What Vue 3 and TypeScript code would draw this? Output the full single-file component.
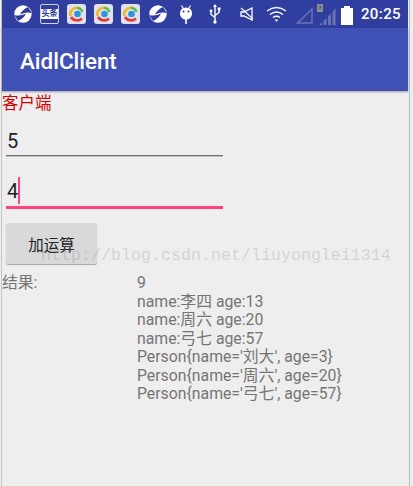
<script setup lang="ts">
const lines: string[] = [
  '9',
  'name:李四 age:13',
  'name:周六 age:20',
  'name:弓七 age:57',
  "Person{name='刘大', age=3}",
  "Person{name='周六', age=20}",
  "Person{name='弓七', age=57}",
]
</script>

<template>
  <div class="frame">
    <div class="phone">
      <div class="status">
        <div class="left-icons">
          <svg class="swirl" width="18" height="18" viewBox="0 0 18 18"><circle cx="9" cy="9" r="8.700" fill="#fff"/><path d="M17.800 8 Q12 6.500 6 9.500 Q8 5 14 2Z" fill="#2f3c9a"/><path d="M0.200 10 Q6 11.500 12 8.500 Q10 13 4 16Z" fill="#2f3c9a"/></svg>
          <div class="toutiao"><span>头条</span></div>
          <div class="tencent" v-for="n in 3" :key="n"><svg width="19" height="20" viewBox="0 0 19 20"><rect width="19" height="20" rx="3" fill="#dfe2ee"/><path d="M3.500 12 A6.500 6.500 0 0 1 10 3.800" fill="none" stroke="#f2b91c" stroke-width="2.600"/><path d="M10 3.800 A6.500 6.500 0 0 1 15.500 8" fill="none" stroke="#5dbb46" stroke-width="2.600"/><path d="M4 13 A7 6.500 0 0 0 15 14.500" fill="none" stroke="#e5392f" stroke-width="2.600"/><circle cx="10.500" cy="10" r="3.300" fill="#2f95dc"/></svg></div>
          <svg class="swirl second" width="18" height="18" viewBox="0 0 18 18"><circle cx="9" cy="9" r="8.700" fill="#fff"/><path d="M17.800 8 Q12 6.500 6 9.500 Q8 5 14 2Z" fill="#2f3c9a"/><path d="M0.200 10 Q6 11.500 12 8.500 Q10 13 4 16Z" fill="#2f3c9a"/></svg>
          <svg class="android" width="14" height="19" viewBox="0 0 14 19"><path d="M2.500 0.500 L4.500 4M11.500 0.500 L9.500 4" stroke="#fff" stroke-width="1.200"/><path d="M1 8 A6 5.500 0 0 1 13 8 L13 9 A6 5.500 0 0 1 1 9Z" fill="#fff"/><rect x="6.200" y="13" width="1.600" height="6" fill="#fff"/><circle cx="4.500" cy="6.500" r="1" fill="#2f3c9a"/><circle cx="9.500" cy="6.500" r="1" fill="#2f3c9a"/></svg>
          <svg class="usb" width="12" height="20" viewBox="0 0 12 20"><path d="M6 2 V18M6 13.500 L2 10.500 V7.500M6 11.500 L10 8.500 V6" stroke="#fff" stroke-width="1.400" fill="none"/><path d="M6 0 L8 3 H4Z" fill="#fff"/><circle cx="6" cy="18" r="1.700" fill="#fff"/><circle cx="2" cy="6.800" r="1.400" fill="#fff"/><rect x="8.700" y="3.500" width="2.800" height="2.800" fill="#fff"/></svg>
        </div>
        <div class="right-icons">
          <svg width="14" height="14" viewBox="0 0 14 14" class="mute"><path d="M1 5 H4 L12 1 V13 L4 9 H1Z" fill="none" stroke="#fff" stroke-width="1.300"/><path d="M1 1 L13 12" stroke="#fff" stroke-width="1.100"/></svg>
          <svg width="21" height="17" viewBox="0 0 21 17" class="wifi"><path d="M1 5 Q10.500 -2 20 5M4 8.500 Q10.500 3.500 17 8.500M7 11.500 Q10.500 9 14 11.500" fill="none" stroke="#fff" stroke-width="1.400"/><path d="M8.800 13.500 H12.200 L10.500 16Z" fill="#fff"/></svg>
          <svg width="17" height="17" viewBox="0 0 17 17" class="tri"><path d="M1.500 16 L16 2 V16Z" fill="none" stroke="#6a74b3" stroke-width="1.500"/></svg>
          <div class="signal">
            <span class="sim">?</span>
            <svg width="19" height="19" viewBox="0 0 19 19"><path d="M2 19 L5 16 V19ZM6.500 19 V15 L9.500 12 V19ZM11 19 V10.500 L14 7.500 V19ZM15.500 19 V6 L18.500 2 V19Z" fill="#6a74b3"/></svg>
          </div>
          <div class="battery"></div>
          <span class="clock">20:25</span>
        </div>
      </div>
      <header class="appbar">AidlClient</header>
      <main class="content">
        <div class="client">客户端</div>
        <div class="field"><span>5</span></div>
        <div class="field focused"><span>4</span><i class="caret"></i></div>
        <button class="calc" type="button">加运算</button>
        <div class="result">
          <div class="label">结果:</div>
          <div class="values"><div v-for="l in lines" :key="l">{{ l }}</div></div>
        </div>
        <div class="watermark">http://blog.csdn.net/liuyonglei1314</div>
      </main>
    </div>
  </div>
</template>

<style>
html, body { margin: 0; background: #eee; }
</style>

<style scoped>
.frame { width: 413px; height: 486px; background: #eee; overflow: hidden; font-family: Roboto, "Noto Sans CJK SC", sans-serif; }
.phone { width: 409px; height: 486px; box-sizing: border-box; margin-left: 1px; border-left: 1px solid #c6c6c6; border-right: 1px solid #bdbdbd; background: #eeeeee; display: flex; flex-direction: column; }
.status { height: 28px; margin-right: 1px; background: #303f9f; display: flex; justify-content: space-between; align-items: center; flex: none; }
.left-icons { display: flex; align-items: center; margin-left: 12px; }
.swirl { flex: none; }
.toutiao { width: 19px; height: 20px; margin-left: 8px; border: 1px solid #cfd3e8; box-sizing: border-box; border-radius: 2px; display: flex; align-items: center; justify-content: center; }
.toutiao span { display: block; width: 100%; background: #fff; color: #2a3a92; text-align: center; font-size: 8px; line-height: 10px; font-weight: 700; white-space: nowrap; }
.tencent { width: 19px; height: 20px; margin-left: 8px; }
.second { margin-left: 9px; }
.android { margin-left: 12px; }
.usb { margin-left: 16px; }
.right-icons { display: flex; align-items: center; margin-right: 7px; }
.mute { margin-right: 12px; }
.wifi { margin-right: 9px; }
.tri { margin-top: 2px; }
.signal { position: relative; width: 19px; height: 19px; margin-left: 4px; margin-right: 5px; margin-top: 2px; }
.sim { position: absolute; left: 0; top: -2px; width: 6px; height: 8px; background: #8d8d94; color: #222; font-size: 6px; line-height: 8px; text-align: center; }
.signal svg { display: block; }
.battery { width: 12px; height: 17px; background: #fff; margin-right: 8px; margin-top: 4px; position: relative; }
.battery::before { content: ""; position: absolute; left: 3px; top: -2px; width: 6px; height: 2px; background: #fff; }
.clock { color: #fff; font-size: 15px; font-weight: 500; letter-spacing: 0.400px; }
.appbar { height: 63px; margin-right: 1px; box-sizing: border-box; background: #3f51b5; color: #fff; font-size: 22.400px; font-weight: 500; line-height: 67px; padding-left: 18px; box-shadow: 0 1px 2px rgba(0,0,0,.35); flex: none; position: relative; }
.content { flex: 1; position: relative; display: flex; flex-direction: column; }
.client { color: #d50000; font-size: 16.500px; line-height: 26px; height: 26px; }
.field { width: 217px; margin-left: 4px; height: 39px; box-sizing: border-box; border-bottom: 1px solid #707070; box-shadow: 0 1px 0 #bdbdbd; font-size: 20px; color: #222; line-height: 28px; padding: 10px 0 0 1px; display: flex; position: relative; }
.focused { border-bottom: 3px solid #ff4081; box-shadow: none; height: 53px; padding-top: 21px; }
.caret { display: block; width: 2px; height: 27px; background: #ff4081; margin-left: 0; }
.calc { width: 91px; height: 41px; margin: 14px 0 0 4px; border: 0; border-radius: 2px; background: #d8d9d8; box-shadow: 0 1px 1px rgba(0,0,0,.3); font-family: inherit; font-size: 15.500px; color: #222; padding: 0; }
.result { display: flex; margin-top: 10px; color: #757575; font-size: 15.800px; line-height: 18.500px; }
.label { width: 135px; box-sizing: border-box; flex: none; }
.watermark { position: absolute; left: 39px; top: 155px; font-family: "Liberation Mono", monospace; font-size: 16.670px; color: rgba(130,130,130,.26); white-space: nowrap; pointer-events: none; }
</style>
